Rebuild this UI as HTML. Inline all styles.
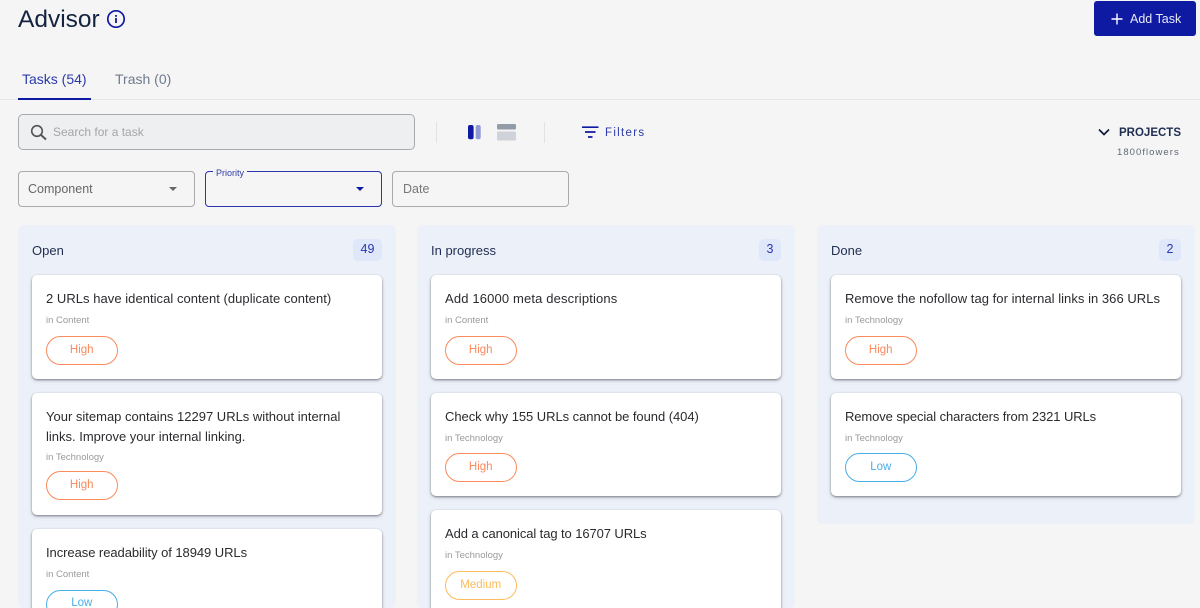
<!DOCTYPE html>
<html><head><meta charset="utf-8"><style>
html,body{margin:0;padding:0;width:1200px;height:608px;overflow:hidden;background:#f5f5f5}
body{position:relative;font-family:"Liberation Sans",sans-serif;}
.a,.c,.t,.s,.p,.col,.n,.ch{position:absolute;box-sizing:border-box;white-space:nowrap}
.col{background:#ecf0f8;border-radius:6px;width:378px;top:225px}
.c{background:#fff;width:350px;border-radius:5px;box-shadow:0 1px 2px rgba(0,0,0,.45),0 2px 5px rgba(60,70,110,.12)}
.t{font-size:13px;color:#2b2b2f;line-height:20px;left:14px}
.s{font-size:9.5px;color:#9a9a9a;line-height:12px;left:14px}
.p{left:14px;width:71.5px;height:29px;border-radius:15px;border:1px solid;font-size:11.5px;line-height:26px;text-align:center;background:#fff}
.h{color:#fb8a5c;border-color:#fb8a5c}.l{color:#4aaee8;border-color:#4aaee8}.m{color:#fdbb5c;border-color:#fdbb5c}
.n{top:239px;height:22px;border-radius:5px;background:#dfe8fb;color:#2a36ad;font-size:12.5px;line-height:21px;text-align:center}
.ch{top:243px;font-size:13px;color:#1f2d50;line-height:15px}
</style></head><body>
<div class="a" style="left:18px;top:4px;font-size:24.5px;line-height:32px;color:#14233f">Advisor</div>
<svg class="a" style="left:106px;top:9px" width="20" height="20" viewBox="0 0 20 20"><circle cx="10" cy="10" r="8.200" fill="none" stroke="#1019a0" stroke-width="1.700"/><rect x="9.100" y="9" width="1.800" height="5" fill="#1019a0"/><rect x="9.100" y="6" width="1.800" height="1.800" fill="#1019a0"/></svg>
<div class="a" style="left:1094px;top:1px;width:102px;height:35px;background:#0f1aa3;border-radius:3px"></div>
<svg class="a" style="left:1110px;top:12px" width="14" height="14" viewBox="0 0 14 14"><path d="M7 1.500V12.500M1.500 7H12.500" stroke="#fff" stroke-width="1.400" fill="none"/></svg>
<div class="a" style="left:1130px;top:11px;font-size:12.500px;line-height:16px;color:#e8eaf8">Add Task</div>

<div class="a" style="left:22px;top:70px;font-size:14px;line-height:18px;color:#2c3aa8">Tasks (54)</div>
<div class="a" style="left:115px;top:70px;font-size:14px;line-height:18px;color:#6f7a8c">Trash (0)</div>
<div class="a" style="left:0;top:99px;width:1200px;height:1px;background:#e6e6e6"></div>
<div class="a" style="left:18px;top:98px;width:73px;height:2px;background:#0f1aa3"></div>

<div class="a" style="left:18px;top:114px;width:397px;height:36px;background:#eeeff0;border:1px solid #aaa;border-radius:5px"></div>
<svg class="a" style="left:30px;top:124px" width="18" height="18" viewBox="0 0 18 18"><circle cx="7" cy="7" r="5.300" fill="none" stroke="#555" stroke-width="1.600"/><path d="M10.800 10.800L16 15.500" stroke="#555" stroke-width="2" fill="none"/></svg>
<div class="a" style="left:53px;top:124px;font-size:12px;line-height:16px;color:#a5a5a5">Search for a task</div>
<div class="a" style="left:436px;top:122px;width:1px;height:21px;background:#e2e2e4"></div>
<div class="a" style="left:544px;top:122px;width:1px;height:21px;background:#e2e2e4"></div>
<svg class="a" style="left:467px;top:124px" width="16" height="16" viewBox="0 0 16 16"><rect x="1" y="1" width="5.600" height="14.300" rx="2" fill="#0f1aa3"/><rect x="8.700" y="1" width="5" height="14.300" rx="2" fill="#929ad6"/></svg>
<svg class="a" style="left:497px;top:124px" width="19" height="17" viewBox="0 0 19 17"><rect x="0" y="0" width="19" height="5.500" rx="1.500" fill="#929ba8"/><rect x="0" y="7.500" width="19" height="9" rx="1" fill="#cfd3d9"/></svg>
<svg class="a" style="left:582px;top:126px" width="17" height="13" viewBox="0 0 17 13"><path d="M0 1.200H16.500M3 6H13.500M6 11H10.500" stroke="#0f1aa3" stroke-width="1.700" fill="none"/></svg>
<div class="a" style="left:605px;top:126px;font-size:11.500px;line-height:15px;letter-spacing:1.300px;color:#2c3aa8">Filters</div>
<svg class="a" style="left:1098px;top:128px" width="12" height="9" viewBox="0 0 12 9"><path d="M1 1.500L6 6.500L11 1.500" stroke="#14233f" stroke-width="1.800" fill="none"/></svg>
<div class="a" style="left:1119px;top:126px;font-size:11.500px;line-height:15px;font-weight:bold;color:#1f2d50">PROJECTS</div>
<div class="a" style="left:1117px;top:147px;font-size:9.500px;line-height:12px;letter-spacing:1.050px;color:#5f6875">1800flowers</div>

<div class="a" style="left:18px;top:171px;width:177px;height:36px;border:1px solid #aaa;border-radius:4px"></div>
<div class="a" style="left:28px;top:181px;font-size:12.500px;line-height:16px;color:#666">Component</div>
<div class="a" style="left:169px;top:187px;border-left:4px solid transparent;border-right:4px solid transparent;border-top:4.500px solid #666"></div>
<div class="a" style="left:205px;top:171px;width:177px;height:36px;border:1px solid #2a36ad;border-radius:4px"></div>
<div class="a" style="left:213px;top:168px;height:8px;padding:0 3px;background:#f5f5f5;font-size:9px;line-height:10px;color:#2c3aa8">Priority</div>
<div class="a" style="left:356px;top:187px;border-left:4px solid transparent;border-right:4px solid transparent;border-top:4.500px solid #0f1aa3"></div>
<div class="a" style="left:392px;top:171px;width:177px;height:36px;border:1px solid #aaa;border-radius:4px"></div>
<div class="a" style="left:403px;top:181px;font-size:12.500px;line-height:16px;color:#777">Date</div>

<div class="col" style="left:18px;height:383px"></div>
<div class="col" style="left:417px;height:383px"></div>
<div class="col" style="left:817px;height:299px"></div>
<div class="ch" style="left:32px">Open</div><div class="n" style="left:353px;width:29px">49</div>
<div class="ch" style="left:431px">In progress</div><div class="n" style="left:759px;width:22px">3</div>
<div class="ch" style="left:831px">Done</div><div class="n" style="left:1159px;width:22px">2</div>

<div class="c" style="left:32px;top:275px;height:104px"><div class="t" style="top:14px;letter-spacing:.04px">2 URLs have identical content (duplicate content)</div><div class="s" style="top:40px">in Content</div><div class="p h" style="top:61px">High</div></div>
<div class="c" style="left:32px;top:393px;height:122px"><div class="t" style="top:14px">Your sitemap contains 12297 URLs without internal<br>links. Improve your internal linking.</div><div class="s" style="top:59px">in Technology</div><div class="p h" style="top:78px;line-height:27px">High</div></div>
<div class="c" style="left:32px;top:529px;height:100px"><div class="t" style="top:14px;letter-spacing:-.06px">Increase readability of 18949 URLs</div><div class="s" style="top:40px">in Content</div><div class="p l" style="top:61px;line-height:25px">Low</div></div>

<div class="c" style="left:431px;top:275px;height:104px"><div class="t" style="top:14px;letter-spacing:.15px">Add 16000 meta descriptions</div><div class="s" style="top:40px">in Content</div><div class="p h" style="top:61px">High</div></div>
<div class="c" style="left:431px;top:393px;height:103px"><div class="t" style="top:14px;letter-spacing:-.05px">Check why 155 URLs cannot be found (404)</div><div class="s" style="top:40px">in Technology</div><div class="p h" style="top:60px">High</div></div>
<div class="c" style="left:431px;top:510px;height:120px"><div class="t" style="top:14px;letter-spacing:-.09px">Add a canonical tag to 16707 URLs</div><div class="s" style="top:40px">in Technology</div><div class="p m" style="top:61px">Medium</div></div>

<div class="c" style="left:831px;top:275px;height:104px"><div class="t" style="top:14px;letter-spacing:.04px">Remove the nofollow tag for internal links in 366 URLs</div><div class="s" style="top:40px">in Technology</div><div class="p h" style="top:61px">High</div></div>
<div class="c" style="left:831px;top:393px;height:103px"><div class="t" style="top:14px;letter-spacing:-.1px">Remove special characters from 2321 URLs</div><div class="s" style="top:40px">in Technology</div><div class="p l" style="top:60px">Low</div></div>
</body></html>
